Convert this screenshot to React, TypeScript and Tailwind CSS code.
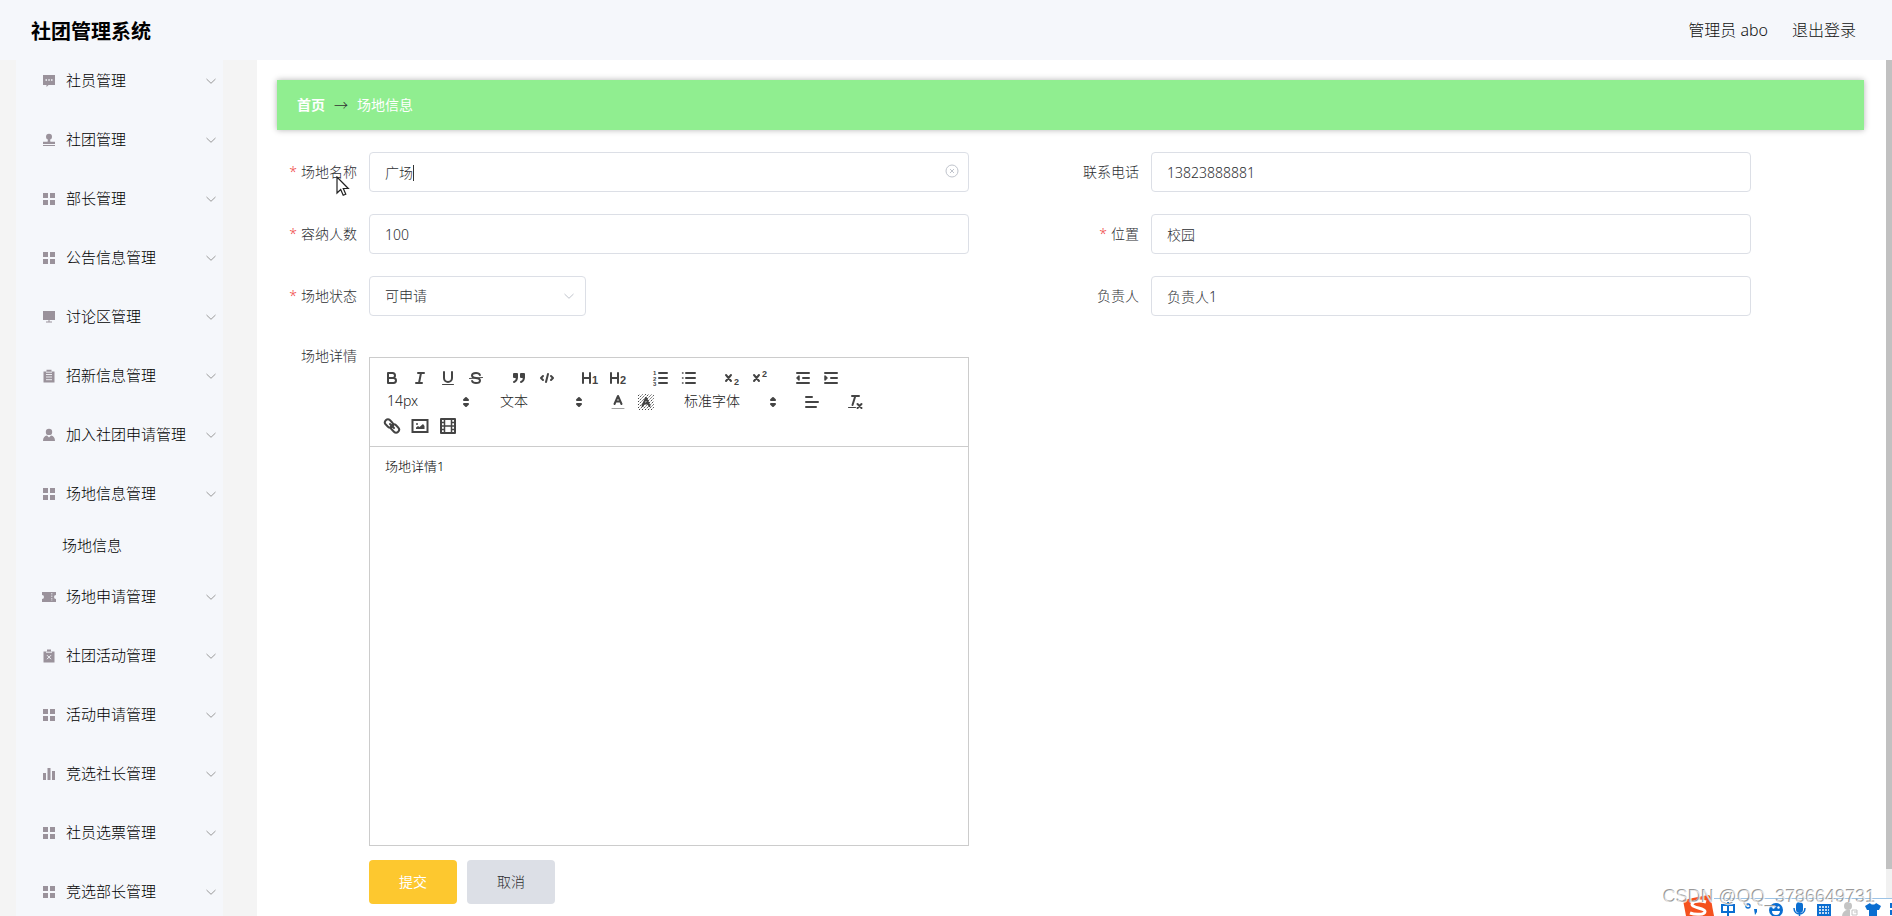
import type { ReactNode } from 'react'

type IconName = 'chat' | 'stamp' | 'grid' | 'monitor' | 'clipboard' | 'user' | 'ticket' | 'clipboardX' | 'bars'

interface MenuItem {
  label: string
  icon: IconName
  children?: string[]
}

const MENU: MenuItem[] = [
  { label: '社员管理', icon: 'chat' },
  { label: '社团管理', icon: 'stamp' },
  { label: '部长管理', icon: 'grid' },
  { label: '公告信息管理', icon: 'grid' },
  { label: '讨论区管理', icon: 'monitor' },
  { label: '招新信息管理', icon: 'clipboard' },
  { label: '加入社团申请管理', icon: 'user' },
  { label: '场地信息管理', icon: 'grid', children: ['场地信息'] },
  { label: '场地申请管理', icon: 'ticket' },
  { label: '社团活动管理', icon: 'clipboardX' },
  { label: '活动申请管理', icon: 'grid' },
  { label: '竞选社长管理', icon: 'bars' },
  { label: '社员选票管理', icon: 'grid' },
  { label: '竞选部长管理', icon: 'grid' },
]

const MENU_ICONS: Record<IconName, ReactNode> = {
  chat: (
    <>
      <path d="M1 1h12v10H6.5L4.5 13v-2H1z" />
      <path d="M3.5 6h1.5M6.3 6h1.5M9 6h1.5" stroke="#f5f7fb" strokeWidth="1.3" />
    </>
  ),
  stamp: (
    <>
      <circle cx="7" cy="3.8" r="3" />
      <path d="M6 6h2l.4 2.8H13V11H1V8.8h4.600zM1 12h12v1H1z" />
    </>
  ),
  grid: <path d="M1 1h5v5H1zM8 1h5v5H8zM1 8h5v5H1zM8 8h5v5H8z" />,
  monitor: <path d="M1 1h12v9H1zM6.500 10h1v1.500h2.500v1H4v-1h2.500z" />,
  clipboard: (
    <>
      <path d="M1.500 2.500h11V13.500h-11zM4.500 .7h5v3h-5z" />
      <path d="M4 5.500h6M4 8h6M4 10.700h6M4 3.200h6" stroke="#f5f7fb" strokeWidth=".9" />
    </>
  ),
  user: (
    <>
      <circle cx="7" cy="3.900" r="3.200" />
      <path d="M1 13c0-3.500 1.500-5 4-5.500L7 9.500l2-2c2.500.5 4 2 4 5.500z" />
    </>
  ),
  ticket: (
    <>
      <path d="M0 2h14v3a1.800 1.800 0 0 0 0 4v3H0V9a1.800 1.800 0 0 0 0-4z" />
      <path d="M9.800 3v8" stroke="#f5f7fb" strokeWidth=".8" strokeDasharray="1.500 1" />
    </>
  ),
  clipboardX: (
    <>
      <path d="M1.500 2.500h11V13.500h-11zM5 .5h4v3H5z" />
      <path d="M4 3.200h6M5 6.200l4 4M9 6.200l-4 4" stroke="#f5f7fb" strokeWidth="1" />
    </>
  ),
  bars: <path d="M1 6h3v7H1zM5.500 1h3v12h-3zM10 4h3v9h-3z" />,
}

function Chevron({ className }: { className: string }) {
  return (
    <svg className={className} viewBox="0 0 12 12" fill="none" stroke="currentColor" strokeWidth="1">
      <path d="M1.500 4 6 8.300 10.500 4" />
    </svg>
  )
}

function Header() {
  return (
    <header className="flex h-[60px] shrink-0 items-center justify-between bg-[#f5f7fb] pr-9 pl-[31px]">
      <h1 className="pt-1 text-[20px] font-bold text-black">社团管理系统</h1>
      <div className="flex items-center gap-6 text-base text-[#111]">
        <span>管理员 abo</span>
        <button type="button">退出登录</button>
      </div>
    </header>
  )
}

function Sidebar() {
  return (
    <aside className="w-[257px] shrink-0 overflow-hidden bg-[#f4f4f4] pr-[34px] pl-4">
      <nav className="-mt-[9px] bg-[#f5f7fb]">
        <ul>
          {MENU.map((item) => (
            <li key={item.label}>
              <button type="button" className="flex h-[59px] w-full items-center pr-[6px] pl-[26px] text-[15px] text-black">
                <svg className="mr-[10px] size-[14px] text-[#9a929b]" viewBox="0 0 14 14" fill="currentColor">
                  {MENU_ICONS[item.icon]}
                </svg>
                {item.label}
                <Chevron className="ml-auto size-3 text-[#999]" />
              </button>
              {item.children?.map((child) => (
                <a key={child} href="#venue" className="flex h-11 items-center pl-[46px] text-[15px] text-black">
                  {child}
                </a>
              ))}
            </li>
          ))}
        </ul>
      </nav>
    </aside>
  )
}

function Field({ id, label, required, children }: { id: string; label: string; required?: boolean; children: ReactNode }) {
  return (
    <div className="flex">
      <label htmlFor={id} className="w-20 shrink-0 pr-3 text-right text-sm leading-10 whitespace-nowrap text-[#2c2e32]">
        {required && <span className="mr-1 text-[#f04545]">*</span>}
        {label}
      </label>
      <div className="relative max-w-[600px] flex-1">{children}</div>
    </div>
  )
}

function TextInput({ id, value }: { id: string; value: string }) {
  return (
    <input
      id={id}
      defaultValue={value}
      className="block h-10 w-full rounded border border-[#dcdfe6] bg-white px-[15px] text-sm text-[#2c2e32] outline-none"
    />
  )
}

function ToolButton({ title, children }: { title: string; children: ReactNode }) {
  return (
    <button type="button" aria-label={title} className="flex h-6 w-7 items-center justify-center">
      <svg
        className="size-[18px]"
        viewBox="0 0 18 18"
        fill="none"
        stroke="#444"
        strokeWidth="2"
        strokeLinecap="round"
        strokeLinejoin="round"
      >
        {children}
      </svg>
    </button>
  )
}

function Picker({ value, wide }: { value: string; wide?: boolean }) {
  return (
    <div className={wide ? 'relative h-6 w-[108px]' : 'relative h-6 w-[98px]'}>
      <select aria-label={value} className="block h-[22px] w-full appearance-none pl-[9px] text-sm text-[#222] outline-none">
        <option>{value}</option>
      </select>
      <svg className="pointer-events-none absolute top-[3px] right-px size-[18px]" viewBox="0 0 18 18" fill="#444" stroke="#444" strokeWidth="2" strokeLinejoin="round">
        <polygon points="7 11 9 13 11 11 7 11" />
        <polygon points="7 7 9 5 11 7 7 7" />
      </svg>
    </div>
  )
}

function Group({ children }: { children: ReactNode }) {
  return <div className="mr-[15px] flex">{children}</div>
}

const digit = { fill: '#444', stroke: 'none', fontFamily: 'Liberation Sans', fontWeight: 700 }

function Toolbar() {
  return (
    <div className="flex flex-wrap border-b border-[#ccc] p-2">
      <Group>
        <ToolButton title="加粗">
          <path d="M5 4h4.500a2.500 2.500 0 0 1 0 5H5zM5 9h5.500a2.500 2.500 0 0 1 0 5H5z" />
        </ToolButton>
        <ToolButton title="斜体">
          <path d="M7 4h6M5 14h6M8 14l2-10" />
        </ToolButton>
        <ToolButton title="下划线">
          <path d="M5 3v6a4 4 0 0 0 8 0V3" />
          <path d="M3.500 15.500h11" strokeWidth="1" />
        </ToolButton>
        <ToolButton title="删除线">
          <path d="M12.900 6C12.500 4.800 10.900 4 9 4 6.800 4 5 5.100 5 6.500S6 8.700 9 9s4 1.100 4 2.500S11.200 14 9 14c-1.900 0-3.500-.8-3.900-2" />
          <path d="M15.500 8.500l-13 1" strokeWidth="1" />
        </ToolButton>
      </Group>
      <Group>
        <ToolButton title="引用">
          <path d="M4 5h3v3H4zM11 5h3v3h-3z" fill="#444" />
          <path d="M7 8c0 4-3 5-3 5M14 8c0 4-3 5-3 5" />
        </ToolButton>
        <ToolButton title="代码">
          <path d="M5 7 3 9l2 2M13 7l2 2-2 2M10 5 8 13" />
        </ToolButton>
      </Group>
      <Group>
        <ToolButton title="标题1">
          <path d="M2 4v10M9 4v10M2 9h7" />
          <text x="11" y="15" fontSize="11" {...digit}>1</text>
        </ToolButton>
        <ToolButton title="标题2">
          <path d="M2 4v10M9 4v10M2 9h7" />
          <text x="11" y="15" fontSize="11" {...digit}>2</text>
        </ToolButton>
      </Group>
      <Group>
        <ToolButton title="有序列表">
          <path d="M7 4h8M7 9h8M7 14h8" />
          <text x="1" y="6" fontSize="6" {...digit}>1</text>
          <text x="1" y="11.500" fontSize="6" {...digit}>2</text>
          <text x="1" y="17" fontSize="6" {...digit}>3</text>
        </ToolButton>
        <ToolButton title="无序列表">
          <path d="M6 4h9M6 9h9M6 14h9" />
          <path d="M2.500 4h.5M2.500 9h.5M2.500 14h.5" strokeWidth="1.500" />
        </ToolButton>
      </Group>
      <Group>
        <ToolButton title="下标">
          <path d="M3 6l5 6M8 6l-5 6" />
          <text x="11" y="16" fontSize="9" {...digit}>2</text>
        </ToolButton>
        <ToolButton title="上标">
          <path d="M3 6l5 6M8 6l-5 6" />
          <text x="11" y="8" fontSize="9" {...digit}>2</text>
        </ToolButton>
      </Group>
      <Group>
        <ToolButton title="减少缩进">
          <path d="M3 4h12M3 14h12M9 9h6" />
          <path d="M5 7v4L3 9z" fill="#444" strokeWidth="1.500" />
        </ToolButton>
        <ToolButton title="增加缩进">
          <path d="M3 4h12M3 14h12M9 9h6" />
          <path d="M3 7v4l2-2z" fill="#444" strokeWidth="1.500" />
        </ToolButton>
      </Group>
      <Group>
        <Picker value="14px" />
      </Group>
      <Group>
        <Picker value="文本" />
      </Group>
      <Group>
        <ToolButton title="字体颜色">
          <path d="M3 15.500h12" strokeWidth="1" opacity=".5" />
          <path d="M5.500 11 9 3l3.500 8M7 8.500h4" strokeWidth="2" />
        </ToolButton>
        <ToolButton title="背景颜色">
          <path
            d="M1 3l2-2M1 6l5-5M1 9l8-8M1 12 12 1M1 15 15 1M2 17 17 2M5 17 17 5M8 17l9-9M11 17l6-6M14 17l3-3"
            strokeWidth="1"
            strokeDasharray="1.500 1"
            strokeLinecap="butt"
          />
          <path d="M5.500 13 9 5l3.500 8M7 10.500h4" strokeWidth="2" />
        </ToolButton>
      </Group>
      <Group>
        <Picker value="标准字体" wide />
      </Group>
      <Group>
        <ToolButton title="对齐">
          <path d="M3 9h12M3 14h10M3 4h6" />
        </ToolButton>
      </Group>
      <Group>
        <ToolButton title="清除格式">
          <path d="M6 3h7M6.500 12l2.500-8" />
          <path d="M2.500 14.500h7" strokeWidth="1" />
          <path d="M11.500 11l4 4M15.500 11l-4 4" />
        </ToolButton>
      </Group>
      <Group>
        <ToolButton title="链接">
          <rect x="1.500" y="3.500" width="9" height="6" rx="3" transform="rotate(45 6 6.500)" />
          <rect x="7.500" y="8.500" width="9" height="6" rx="3" transform="rotate(45 12 11.500)" />
          <path d="M7 7l4 4" />
        </ToolButton>
        <ToolButton title="图片">
          <rect x="1.500" y="3" width="15" height="12" strokeLinejoin="miter" />
          <circle cx="6" cy="7" r="1" fill="#444" stroke="none" />
          <path d="M5 12v-1.500l2-1.500 1.500 1L12 7l1.500 2v3z" fill="#444" stroke="none" />
        </ToolButton>
        <ToolButton title="视频">
          <rect x="2" y="2" width="14" height="14" />
          <path d="M5.500 2v14M12.500 2v14M5.500 9h7M2 5.500h3M2 9h3M2 12.500h3M13 5.500h3M13 9h3M13 12.500h3" strokeWidth="1.500" />
        </ToolButton>
      </Group>
    </div>
  )
}

function VenueForm() {
  return (
    <form className="mt-[22px] pr-[11px] pl-3">
      <div className="grid grid-cols-2 gap-y-[22px]">
        <Field id="name" label="场地名称" required>
          <TextInput id="name" value="广场" />
          <span className="absolute top-[13px] left-[44px] h-4 w-px bg-[#333]" />
          <button type="button" aria-label="清空" className="absolute top-3 right-[10px] text-[#c0c4cc]">
            <svg className="size-[14px]" viewBox="0 0 14 14" fill="none" stroke="currentColor">
              <circle cx="7" cy="7" r="6" />
              <path d="M5 5l4 4M9 5l-4 4" />
            </svg>
          </button>
        </Field>
        <Field id="phone" label="联系电话">
          <TextInput id="phone" value="13823888881" />
        </Field>
        <Field id="capacity" label="容纳人数" required>
          <TextInput id="capacity" value="100" />
        </Field>
        <Field id="place" label="位置" required>
          <TextInput id="place" value="校园" />
        </Field>
        <Field id="status" label="场地状态" required>
          <div className="relative w-[217px]">
            <select
              id="status"
              className="block h-10 w-full appearance-none rounded border border-[#dcdfe6] bg-white px-[15px] text-sm text-[#2c2e32] outline-none"
            >
              <option>可申请</option>
            </select>
            <Chevron className="pointer-events-none absolute top-[14px] right-[11px] size-3 text-[#c0c4cc]" />
          </div>
        </Field>
        <Field id="owner" label="负责人">
          <TextInput id="owner" value="负责人1" />
        </Field>
      </div>
      <div className="mt-5 grid grid-cols-2">
        <Field id="detail" label="场地详情">
          <div className="mt-[21px] border border-[#ccc]">
            <Toolbar />
            <textarea
              id="detail"
              defaultValue="场地详情1"
              className="block h-[398px] w-full resize-none px-[15px] py-[10px] text-[13px] leading-[18px] text-black outline-none"
            />
          </div>
        </Field>
      </div>
      <div className="mt-[14px] flex gap-[10px] pl-20 text-sm">
        <button type="submit" className="h-11 w-[88px] rounded bg-[#fdc82f] font-normal text-white">
          提交
        </button>
        <button type="button" className="h-11 w-[88px] rounded bg-[#dcdfe6] text-[#2c2e32]">
          取消
        </button>
      </div>
    </form>
  )
}

function Pointer() {
  return (
    <svg className="pointer-events-none absolute top-[176px] left-[336px] h-[21px] w-[14px]" viewBox="0 0 14 21" fill="#fff" stroke="#222" strokeWidth="1.200">
      <path d="M1 1v16l3.700-3.500 2.500 5.800 2.600-1.100-2.500-5.700h5z" />
    </svg>
  )
}

// Input method bar, partly below the screen edge
function ImeBar() {
  return (
    <div className="pointer-events-none absolute right-0 bottom-0 flex h-[22px] w-[209px] items-end">
      <svg className="h-[21px] w-[31px] shrink-0" viewBox="0 0 31 21">
        <path d="M0 5 25 0q2 0 2.500 2L31 21H3z" fill="#f4511e" />
        <path d="M23 7c-6-2-14-1-14 2.500S22 13 22 16.500 12 20 7 18" fill="none" stroke="#fff" strokeWidth="3" />
      </svg>
      <div className="h-[18px] flex-1 overflow-hidden border-t border-[#9cc3e6] bg-white">
        <svg className="h-[18px] w-[178px]" viewBox="2 1 178 18" fill="#0a6ed1">
          <path d="M10 7h12v7H10zM16 4v15" fill="none" stroke="#0a6ed1" strokeWidth="2" />
          <circle cx="36" cy="8" r="2" fill="none" stroke="#0a6ed1" strokeWidth="1.500" />
          <path d="M42 11h3v3l-2 3z" />
          <circle cx="64" cy="12" r="7" />
          <path d="M60 13a4 4 0 0 0 8 0z" fill="#fff" />
          <circle cx="61.500" cy="9.500" r="1.200" fill="#fff" />
          <circle cx="66.500" cy="9.500" r="1.200" fill="#fff" />
          <rect x="84" y="4" width="7" height="11" rx="3.500" />
          <path d="M82 10c0 8 11 8 11 0M87.500 15v3" fill="none" stroke="#0a6ed1" strokeWidth="1.500" />
          <rect x="105" y="6" width="14" height="13" />
          <path d="M107 9h10M107 12h10M107 15h10" stroke="#fff" strokeWidth="1.500" strokeDasharray="2 1" />
          <circle cx="136" cy="8" r="4" fill="#c4c4c4" />
          <path d="M130 19c0-5 3-7 6-7h2v7z" fill="#c4c4c4" />
          <path d="M140 12h5v5h-5zM142 14h3" fill="none" stroke="#c4c4c4" />
          <path d="M153 8l5-3c1 2 5 2 6 0l5 3-2 4h-2v7h-8v-7h-2z" />
          <path d="M178 5h5v5h-5zM178 12h5v5h-5z" />
        </svg>
      </div>
    </div>
  )
}

export default function App() {
  return (
    <div className="relative flex h-screen flex-col overflow-hidden bg-white font-['Noto_Sans','Noto_Sans_CJK_SC',sans-serif] font-light">
      <Header />
      <div className="flex min-h-0 flex-1">
        <Sidebar />
        <main className="min-w-0 flex-1 overflow-hidden pt-5 pr-[22px] pl-5">
          <nav className="flex h-[50px] items-center gap-[9px] bg-[#90ee90] px-5 text-sm text-white shadow-[0_0_6px_rgba(0,0,0,0.3)]">
            <a href="#home" className="font-bold">首页</a>
            <span className="text-[#333]">→</span>
            <a href="#venue" className="font-normal">场地信息</a>
          </nav>
          <VenueForm />
        </main>
        <div className="w-[6px] shrink-0 bg-[#f1f1f1]">
          <div className="h-[94.500%] bg-[#c1c1c1]" />
        </div>
      </div>
      <Pointer />
      <ImeBar />
      <p className="pointer-events-none absolute right-4 bottom-[5px] font-['Liberation_Sans',sans-serif] text-lg text-white/70 [text-shadow:-1px_-1px_0_#999]">
        CSDN @QQ_3786649731
      </p>
    </div>
  )
}
